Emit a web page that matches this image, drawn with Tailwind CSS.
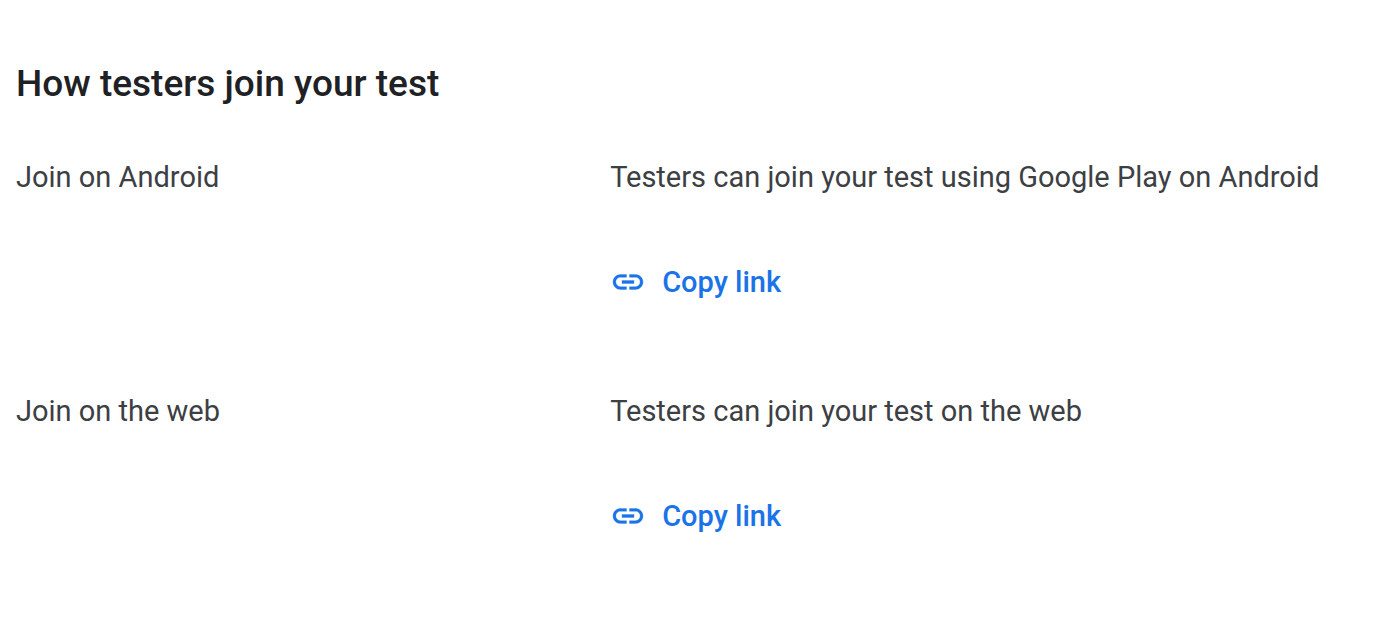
<!DOCTYPE html>
<html lang="en">
<head>
<meta charset="utf-8">
<meta name="viewport" content="width=device-width, initial-scale=1">
<title>How testers join your test</title>
<script src="https://cdn.jsdelivr.net/npm/@tailwindcss/browser@4"></script>
</head>
<body class="bg-white font-[Roboto,sans-serif] text-[29px] leading-10 text-[#3c4043]">
<main class="px-4 pt-15 pb-20">
  <h2 class="text-[37px] leading-12 font-medium text-[#202124]">How testers join your test</h2>
  <div class="mt-[49px] flex flex-col gap-[89px]">
    <section class="grid grid-cols-[minmax(0,7fr)_minmax(0,9fr)]">
      <h3>Join on Android</h3>
      <div class="flex flex-col items-start gap-[65px]">
        <p>Testers can join your test using Google Play on Android</p>
        <button type="button" class="flex items-center gap-4 font-medium text-[#1a73e8]">
          <svg class="size-9" viewBox="0 0 24 24" fill="currentColor" stroke="currentColor" stroke-width=".2" aria-hidden="true"><path d="M3.9 12c0-1.71 1.39-3.1 3.1-3.1h4V7H7c-2.76 0-5 2.24-5 5s2.24 5 5 5h4v-1.9H7c-1.71 0-3.1-1.39-3.1-3.1zM8 13h8v-2H8v2zm9-6h-4v1.9h4c1.71 0 3.1 1.39 3.1 3.1s-1.39 3.1-3.1 3.1h-4V17h4c2.76 0 5-2.24 5-5s-2.24-5-5-5z"/></svg>
          Copy link
        </button>
      </div>
    </section>
    <section class="grid grid-cols-[minmax(0,7fr)_minmax(0,9fr)]">
      <h3>Join on the web</h3>
      <div class="flex flex-col items-start gap-[65px]">
        <p>Testers can join your test on the web</p>
        <button type="button" class="flex items-center gap-4 font-medium text-[#1a73e8]">
          <svg class="size-9" viewBox="0 0 24 24" fill="currentColor" stroke="currentColor" stroke-width=".2" aria-hidden="true"><path d="M3.9 12c0-1.71 1.39-3.1 3.1-3.1h4V7H7c-2.76 0-5 2.24-5 5s2.24 5 5 5h4v-1.9H7c-1.71 0-3.1-1.39-3.1-3.1zM8 13h8v-2H8v2zm9-6h-4v1.9h4c1.71 0 3.1 1.39 3.1 3.1s-1.39 3.1-3.1 3.1h-4V17h4c2.76 0 5-2.24 5-5s-2.24-5-5-5z"/></svg>
          Copy link
        </button>
      </div>
    </section>
  </div>
</main>
</body>
</html>
